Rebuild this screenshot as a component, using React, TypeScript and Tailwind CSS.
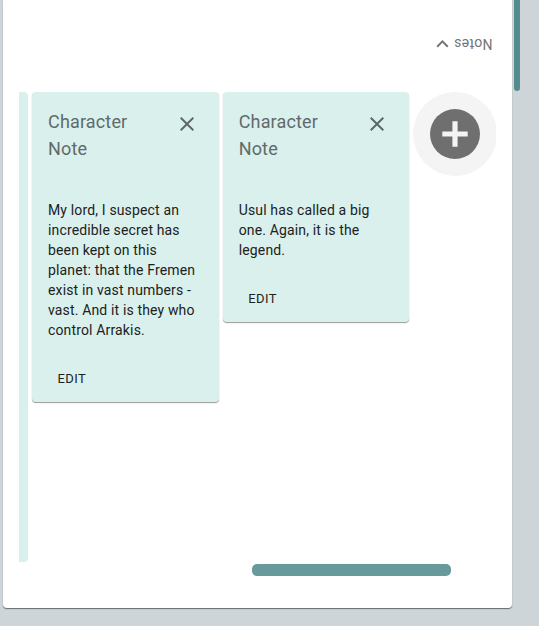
type NoteProps = { text: string; className: string; padding: string };

function Note({ text, className, padding }: NoteProps) {
  return (
    <article
      className={`shrink-0 rounded bg-[#daf0ed] pt-4 shadow-[0_1px_1px_rgba(0,0,0,0.4)] ${padding} ${className}`}
    >
      <header className="flex justify-between">
        <h2 className="w-[90px] text-[18px] leading-[27px] tracking-[0.16px] text-[#5f6b6a]">
          Character Note
        </h2>
        <button aria-label="Delete note" className="mt-1 mr-5 h-6 w-6 text-[#5d6867]">
          <svg viewBox="0 0 24 24" className="h-6 w-6" fill="currentColor">
            <path d="M19 6.41 17.59 5 12 10.59 6.41 5 5 6.41 10.59 12 5 17.59 6.41 19 12 13.41 17.59 19 19 17.59 13.41 12 19 6.41z" />
          </svg>
        </button>
      </header>
      <p className="mt-[38px] w-[152px] text-[14px] leading-5 tracking-[0.15px] text-[#1b2221]">
        {text}
      </p>
      <button className="mt-[31px] ml-[9.5px] block h-[16px] text-[13px] leading-4 tracking-[0.4px] text-[#1b2221]">
        EDIT
      </button>
    </article>
  );
}

export default function App() {
  return (
    <div className="relative h-[626px] w-[539px] overflow-hidden bg-[#cdd5d8] pl-[3px] font-[Roboto,sans-serif]">
      <main className="flex h-[608px] w-[509px] flex-col rounded-b bg-white px-4 shadow-[0_1px_1px_rgba(0,0,0,0.5)]">
        <div className="flex h-[92px] items-start justify-end pt-8 pr-1">
          <button className="flex h-6 rotate-180 items-center text-[#757575]">
            <span className="text-[14px] leading-6 tracking-[0.25px]">Notes</span>
            <svg viewBox="0 0 24 24" className="h-6 w-6" fill="currentColor">
              <path d="M16.59 8.59 12 13.17 7.41 8.59 6 10l6 6 6-6z" />
            </svg>
          </button>
        </div>
        <section className="flex h-[472px] items-start overflow-hidden">
          <div className="mr-1 h-[470px] w-[9px] shrink-0 rounded-r bg-[#daf0ed]" />
          <Note
            className="mr-1 h-[310px] w-[187px]"
            padding="pl-4"
            text="My lord, I suspect an incredible secret has been kept on this planet: that the Fremen exist in vast numbers - vast. And it is they who control Arrakis."
          />
          <Note
            className="mr-1 h-[230px] w-[186px]"
            padding="pl-[15.7px]"
            text="Usul has called a big one. Again, it is the legend."
          />
          <button
            aria-label="Add note"
            className="flex h-[84px] w-[84px] shrink-0 items-center justify-center rounded-full bg-[#f4f4f4] text-[#6f6f6f]"
          >
            <svg viewBox="0 0 50 50" className="h-[50px] w-[50px]">
              <circle cx="25" cy="25" r="25" fill="currentColor" />
              <path d="M12.3 25h25.4M25 12.3v25.4" stroke="#f4f4f4" strokeWidth="5.2" />
            </svg>
          </button>
        </section>
        <div className="ml-[233px] h-3 w-[199px] shrink-0 rounded-[5px] bg-[#679b9b]" />
      </main>
      <div className="absolute -top-2 left-[514px] h-[99px] w-1.5 rounded-full bg-[#548c8e]" />
    </div>
  );
}
